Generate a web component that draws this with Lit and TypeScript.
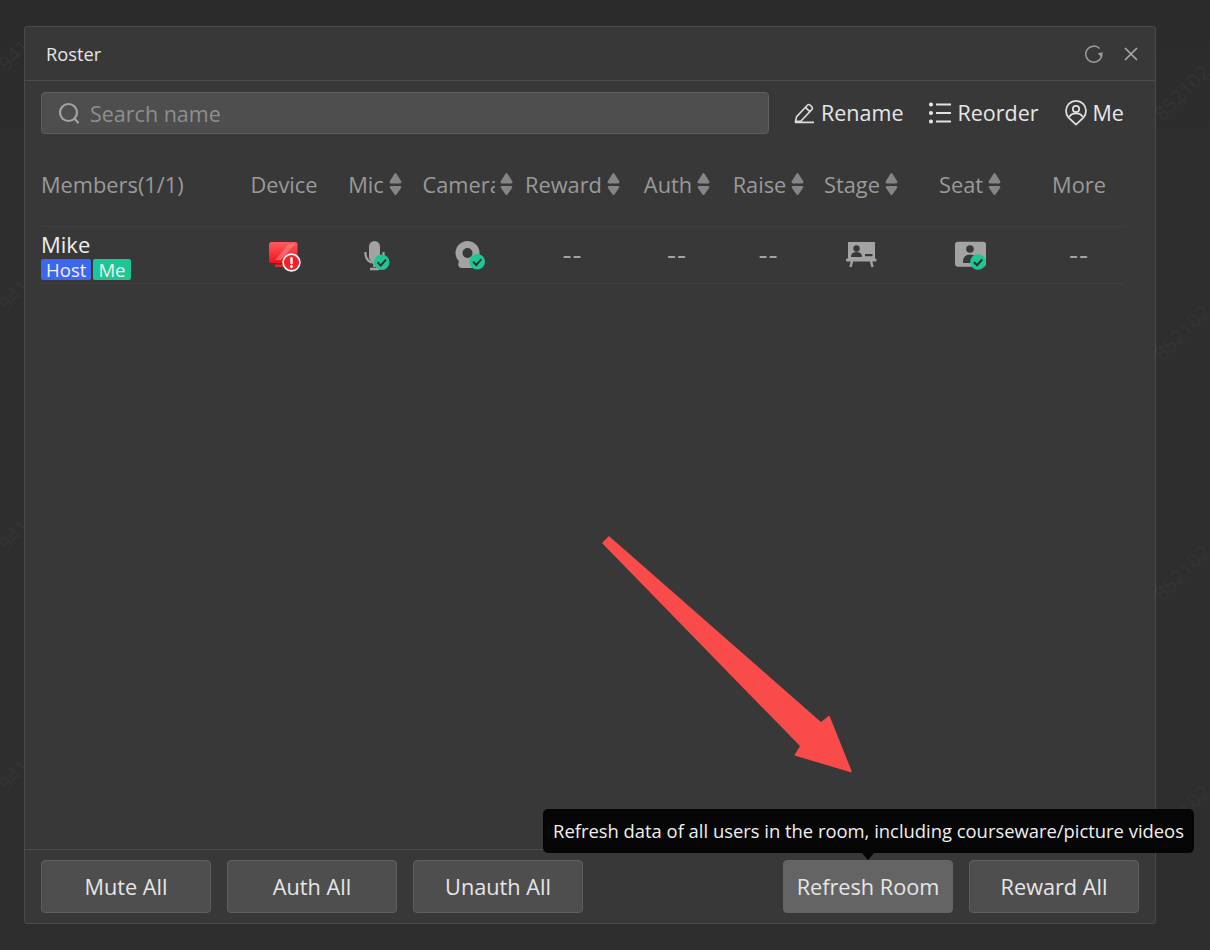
import { LitElement, html, css, svg } from "lit";
import { customElement } from "lit/decorators.js";

const check = (cx: number, cy: number, r: number) => svg`
  <circle cx=${cx} cy=${cy} r=${r} fill="#1cc795"/>
  <path d="M${cx - r * 0.52} ${cy} l${r * 0.4} ${r * 0.42} l${r * 0.66} ${r * -0.76}" fill="none" stroke="#2f2f2f" stroke-width="2"/>`;

const sorter = html`<svg class="sort" width="13" height="24" viewBox="0 0 13 24">
  <path d="M6.500 1 Q7 1 7.500 1.800 L12.400 9.500 Q13 11.500 11 11.500 H2 Q0 11.500 .6 9.500 L5.500 1.800 Q6 1 6.500 1Z M6.500 23 Q6 23 5.500 22.400 L1 16 Q0 14 2 14 H11 Q13 14 12 16 L7.500 22.400 Q7 23 6.500 23Z" fill="#858585"/></svg>`;

const cell = (content: unknown) => html`<svg width="40" height="36" viewBox="0 0 40 36">${content}</svg>`;

const icons = {
  search: html`<svg width="24" height="24" viewBox="0 0 24 24" fill="none" stroke="#a3a3a3" stroke-width="2.200" stroke-linecap="round"><circle cx="11.500" cy="11.500" r="8.500"/><path d="M17.800 18 L21 21.400"/></svg>`,
  refresh: html`<svg width="18" height="18" viewBox="0 0 18 18" fill="none"><path d="M14.600 3.600 A8 8 0 1 0 16.800 9.500" stroke="#9c9c9c" stroke-width="1.500"/><path d="M12.600 8.200 L17.800 7.200 L16.800 12.400Z" fill="#9c9c9c"/></svg>`,
  close: html`<svg width="16" height="16" viewBox="0 0 16 16" stroke="#a8a8a8" stroke-width="1.700"><path d="M2 2 L14 14 M14 2 L2 14"/></svg>`,
  rename: html`<svg width="21" height="22" viewBox="0 0 21 22" fill="none" stroke="#dcdcdc" stroke-width="1.600"><path d="M1.500 19.500 L2.600 14.600 L13.600 3 Q14.800 2 16 3 L18 5 Q19 6.200 18 7.400 L7 19Z M11.500 5.400 L15.800 9.600 M1 20.400 H20"/></svg>`,
  reorder: html`<svg width="22" height="22" viewBox="0 0 22 22" fill="none" stroke="#e2e2e2" stroke-width="1.800"><path d="M7 2.500 H22 M7 11 H22 M7 19.500 H22"/><circle cx="2" cy="2.500" r="1.200" fill="#e2e2e2"/><circle cx="2" cy="11" r="1.200" fill="#e2e2e2"/><circle cx="2" cy="19.500" r="1.200" fill="#e2e2e2"/></svg>`,
  me: html`<svg width="22" height="26" viewBox="0 0 22 26" fill="none" stroke="#e2e2e2" stroke-width="1.700"><path d="M11 24.600 L3.600 17.600 A10 10 0 1 1 18.400 17.600Z"/><circle cx="11" cy="9" r="3.200"/><path d="M4.400 17 Q6 13.400 11 13.400 Q16 13.400 17.600 17"/></svg>`,
  device: cell(svg`<defs><linearGradient id="dg" x1="0" y1="0" x2="0" y2="1"><stop offset="0" stop-color="#ff5b5f"/><stop offset="1" stop-color="#f3101c"/></linearGradient></defs>
    <rect x="5" y="5" width="28.500" height="21" rx="2.500" fill="url(#dg)"/><path d="M17 23 L31 7 H25 L11 23Z" fill="#ff8d90" opacity=".55"/><rect x="11" y="27.500" width="12" height="2.500" fill="#f0232b"/>
    <circle cx="27.500" cy="25.500" r="8.400" fill="#f5222d" stroke="#fff" stroke-width="1.600"/><rect x="26.300" y="20" width="2.400" height="7.200" rx="1" fill="#fff"/><circle cx="27.500" cy="29.500" r="1.400" fill="#fff"/>`),
  mic: cell(svg`<rect x="14" y="4" width="11" height="21" rx="5.500" fill="#a3a3a3"/><path d="M10.500 15 V17 A9 9 0 0 0 28.500 17 V15" fill="none" stroke="#a3a3a3" stroke-width="2.200"/><path d="M19.500 26 V30 M15 32 H24" stroke="#a3a3a3" stroke-width="2.600"/>${check(26.700, 25.300, 7.800)}`),
  cam: cell(svg`<circle cx="19.500" cy="16" r="8.500" fill="none" stroke="#a3a3a3" stroke-width="7"/><path d="M11 24 Q8.500 31 14 31 H26 V25Z" fill="#a3a3a3"/>${check(29.200, 24.700, 7.800)}`),
  stage: cell(svg`<rect x="7" y="5" width="27" height="18" fill="#a3a3a3"/><rect x="5" y="21.500" width="30.500" height="3" rx="1" fill="#a3a3a3"/><path d="M11 24 L9.500 30 M30 24 L31.500 30" stroke="#a3a3a3" stroke-width="2.400"/><circle cx="15.500" cy="11.500" r="3.200" fill="#383838"/><path d="M10 20 Q10 15 15.500 15 Q21 15 21 20Z" fill="#383838"/><rect x="24" y="17" width="7.500" height="2.200" fill="#383838"/>`),
  seat: cell(svg`<rect x="5" y="4.700" width="31" height="25" rx="3" fill="#a3a3a3"/><circle cx="20" cy="12" r="3.800" fill="#383838"/><path d="M13 25 Q13 17.500 20 17.500 Q27 17.500 27 25 V26 H13Z" fill="#383838"/>${check(28, 25, 7.800)}`),
};

const marks = [0, 240, 480, 720];

@customElement("app-root")
export class AppRoot extends LitElement {
  static styles = css`
    :host { display: block; width: 1210px; height: 950px; overflow: hidden; position: relative;
      background: linear-gradient(#2b2b2b, #2e2e2e 20%); font-family: "Open Sans", "Noto Sans", sans-serif; box-sizing: border-box; padding: 26px 54px 26px 24px; }
    .mark { position: absolute; color: #343434; font-size: 20px; line-height: 24px; white-space: nowrap; transform: rotate(-45deg); transform-origin: 0 50%; }
    .dialog { position: relative; height: 898px; box-sizing: border-box; border: 1px solid #4c4c4c; border-radius: 3px; background: #383838; display: flex; flex-direction: column; }
    .head { height: 54px; flex: none; box-sizing: border-box; border-bottom: 1px solid #4c4c4c; display: flex; align-items: center; padding: 0 16px 0 21px; color: #e6e6e6; font-size: 18.300px; }
    .head .title { flex: 1; }
    .head .tools { display: flex; align-items: center; gap: 20px; }
    .head svg { display: block; }
    .toolbar { display: flex; align-items: center; padding: 11px 0 0 16px; height: 42px; }
    .search { width: 728px; height: 42px; box-sizing: border-box; background: #4e4e4e; border: 1px solid #5f5f5f; border-radius: 4px; display: flex; align-items: center; gap: 9px; padding: 0 0 0 15px; color: #8f8f8f; font-size: 21.500px; }
    .actions { display: flex; align-items: center; margin-left: 25px; gap: 26px; color: #e6e6e6; font-size: 21.500px; }
    .action { display: flex; align-items: center; gap: 6px; white-space: nowrap; }
    .action span { padding-bottom: 2px; }
    .table { margin: 0 30px 0 16px; }
    .grid { display: grid; grid-template-columns: 199px 88px 94px 91px 119px 90px 93px 92px 126px 92px; align-items: center; }
    .thead { height: 92px; box-sizing: border-box; padding-top: 8px; color: #9a9a9a; font-size: 21.800px; }
    .th { display: flex; align-items: center; justify-content: center; gap: 5px; white-space: nowrap; }
    .th:first-child { justify-content: flex-start; }
    .clip { display: block; width: 72px; overflow: hidden; }
    .sort { flex: none; }
    .row { height: 58px; box-sizing: border-box; border-top: 1px solid #404040; border-bottom: 1px solid #404040; }
    .td { display: flex; justify-content: center; align-items: center; color: #a3a3a3; font-size: 28px; line-height: 32px; letter-spacing: 1px; padding-bottom: 4px; }
    .td.ic { padding-bottom: 0; }
    .td svg { display: block; }
    .user { display: flex; flex-direction: column; align-items: flex-start; justify-content: center; padding-top: 1px; }
    .name { color: #eeeeee; font-size: 22px; line-height: 24px; }
    .tags { display: flex; gap: 2px; margin-top: 3px; }
    .tag { height: 21px; line-height: 21px; padding: 0 5px; border-radius: 2px; color: #f0f0f0; font-size: 18.600px; }
    .host { background: #3e67f1; }
    .metag { background: #1cc795; }
    .spacer { flex: 1; }
    .foot { height: 74px; box-sizing: border-box; flex: none; border-top: 1px solid #4c4c4c; padding: 10px 16px 0; display: flex; gap: 16px; }
    button { width: 170px; height: 53px; box-sizing: border-box; background: #4e4e4e; border: 1px solid #5f5f5f; border-radius: 4px; color: #e6e6e6; font: inherit; font-size: 21.700px; padding: 0; }
    button.hot { background: #646464; border-color: #646464; }
    .gap { flex: 1; }
    .tip { position: absolute; left: 518px; top: 782px; height: 44px; box-sizing: border-box; width: 651px; padding-bottom: 2px; background: #050505; border-radius: 5px; color: #f0f0f0; font-size: 18.400px; display: flex; align-items: center; justify-content: center; white-space: nowrap; }
    .tip::after { content: ""; position: absolute; left: 319px; bottom: -7px; border: 6px solid transparent; border-bottom: 0; border-top: 7px solid #050505; }
    .arrow { position: absolute; left: 0; top: 0; pointer-events: none; }
  `;

  render() {
    const heads: [string, boolean][] = [["Device", false], ["Mic", true], ["Camera", true], ["Reward", true], ["Auth", true], ["Raise", true], ["Stage", true], ["Seat", true], ["More", false]];
    return html`
      ${marks.map((y) => html`<span class="mark" style="left:1158px;top:${y + 105}px">852102</span><span class="mark" style="left:2px;top:${y + 55}px">941</span>`)}
      <div class="dialog">
        <div class="head"><span class="title">Roster</span><span class="tools">${icons.refresh}${icons.close}</span></div>
        <div class="toolbar">
          <div class="search">${icons.search}<span>Search name</span></div>
          <div class="actions">
            <span class="action">${icons.rename}<span>Rename</span></span>
            <span class="action">${icons.reorder}<span>Reorder</span></span>
            <span class="action">${icons.me}<span>Me</span></span>
          </div>
        </div>
        <div class="table">
          <div class="grid thead">
            <div class="th">Members(1/1)</div>
            ${heads.map(([t, s]) => html`<div class="th"><span class=${t === "Camera" ? "clip" : ""}>${t}</span>${s ? sorter : ""}</div>`)}
          </div>
          <div class="grid row">
            <div class="user"><span class="name">Mike</span><span class="tags"><span class="tag host">Host</span><span class="tag metag">Me</span></span></div>
            <div class="td ic">${icons.device}</div>
            <div class="td ic">${icons.mic}</div>
            <div class="td ic">${icons.cam}</div>
            <div class="td">--</div>
            <div class="td">--</div>
            <div class="td">--</div>
            <div class="td ic">${icons.stage}</div>
            <div class="td ic">${icons.seat}</div>
            <div class="td">--</div>
          </div>
        </div>
        <div class="spacer"></div>
        <div class="foot">
          <button>Mute All</button><button>Auth All</button><button>Unauth All</button>
          <span class="gap"></span>
          <button class="hot">Refresh Room</button><button>Reward All</button>
        </div>
        <div class="tip">Refresh data of all users in the room, including courseware/picture videos</div>
      </div>
      <svg class="arrow" width="1210" height="950" viewBox="0 0 1210 950">
        <path d="M603 543 L609 537 L821 723 L829 716.500 L851 771.500 L795.500 755 L801 746Z" fill="#f94c4a" stroke="#f94c4a" stroke-width="1.500" stroke-linejoin="round"/>
      </svg>
    `;
  }
}
